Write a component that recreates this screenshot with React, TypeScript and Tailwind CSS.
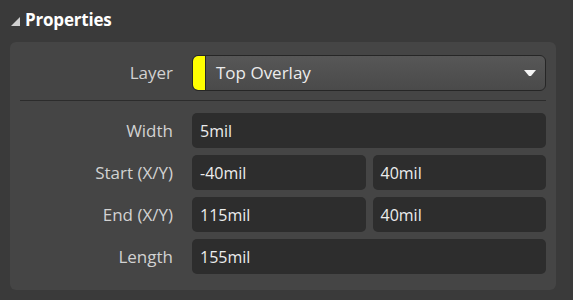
import React from "react";

const font = { fontFamily: '"Open Sans", "Noto Sans", sans-serif' };

function Field({ value }: { value: string }) {
  return (
    <div className="flex h-[35px] flex-1 items-center rounded-[5px] bg-[#2d2d2d] pl-2 text-[16px] text-[#ececec]">
      {value}
    </div>
  );
}

function Row({ label, children }: { label: string; children: React.ReactNode }) {
  return (
    <div className="flex items-center">
      <div className="w-[163px] text-right text-[17px] text-[#d2d2d2]">{label}</div>
      <div className="ml-[19px] flex flex-1 gap-[7px]">{children}</div>
    </div>
  );
}

export default function App() {
  return (
    <div className="flex h-[300px] w-[573px] flex-col bg-[#3a3a3a]" style={font}>
      {/* header */}
      <div className="flex h-[42px] items-center pl-[11px] pb-[2px]">
        <svg width="9" height="9" viewBox="0 0 9 9" className="mt-[2px]">
          <path d="M9 0 L9 9 L0 9 Z" fill="#d0d0d0" />
        </svg>
        <span className="ml-[5px] text-[17px] font-bold tracking-[-0.2px] text-white">Properties</span>
      </div>

      {/* panel */}
      <div className="ml-[10px] mr-[17px] flex flex-1 flex-col rounded-[6px] bg-[#454545] pr-[10px] pt-[13px] pb-[16px]">
        <Row label="Layer">
          <div className="flex h-[36px] flex-1 items-center overflow-hidden rounded-[6px] border border-[#262626] bg-gradient-to-b from-[#575757] to-[#4a4a4a]">
            <div className="h-full w-[13px] rounded-l-[5px] border-r border-[#262626] bg-[#ffff00]" />
            <span className="ml-[10px] flex-1 text-[17px] text-[#ececec]">Top Overlay</span>
            <svg width="12" height="7" viewBox="0 0 12 7" className="mr-[9px]">
              <path d="M0 0 L12 0 L7 6 L5 6 Z" fill="#f4f4f4" />
            </svg>
          </div>
        </Row>
        <div className="ml-[10px] mt-[9px] mb-[12px] h-px bg-[#2c2c2c]" />
        <div className="flex flex-col gap-[7px]">
          <Row label="Width">
            <Field value="5mil" />
          </Row>
          <Row label="Start (X/Y)">
            <Field value="-40mil" />
            <Field value="40mil" />
          </Row>
          <Row label="End (X/Y)">
            <Field value="115mil" />
            <Field value="40mil" />
          </Row>
          <Row label="Length">
            <Field value="155mil" />
          </Row>
        </div>
      </div>
      <div className="h-[10px]" />
    </div>
  );
}
